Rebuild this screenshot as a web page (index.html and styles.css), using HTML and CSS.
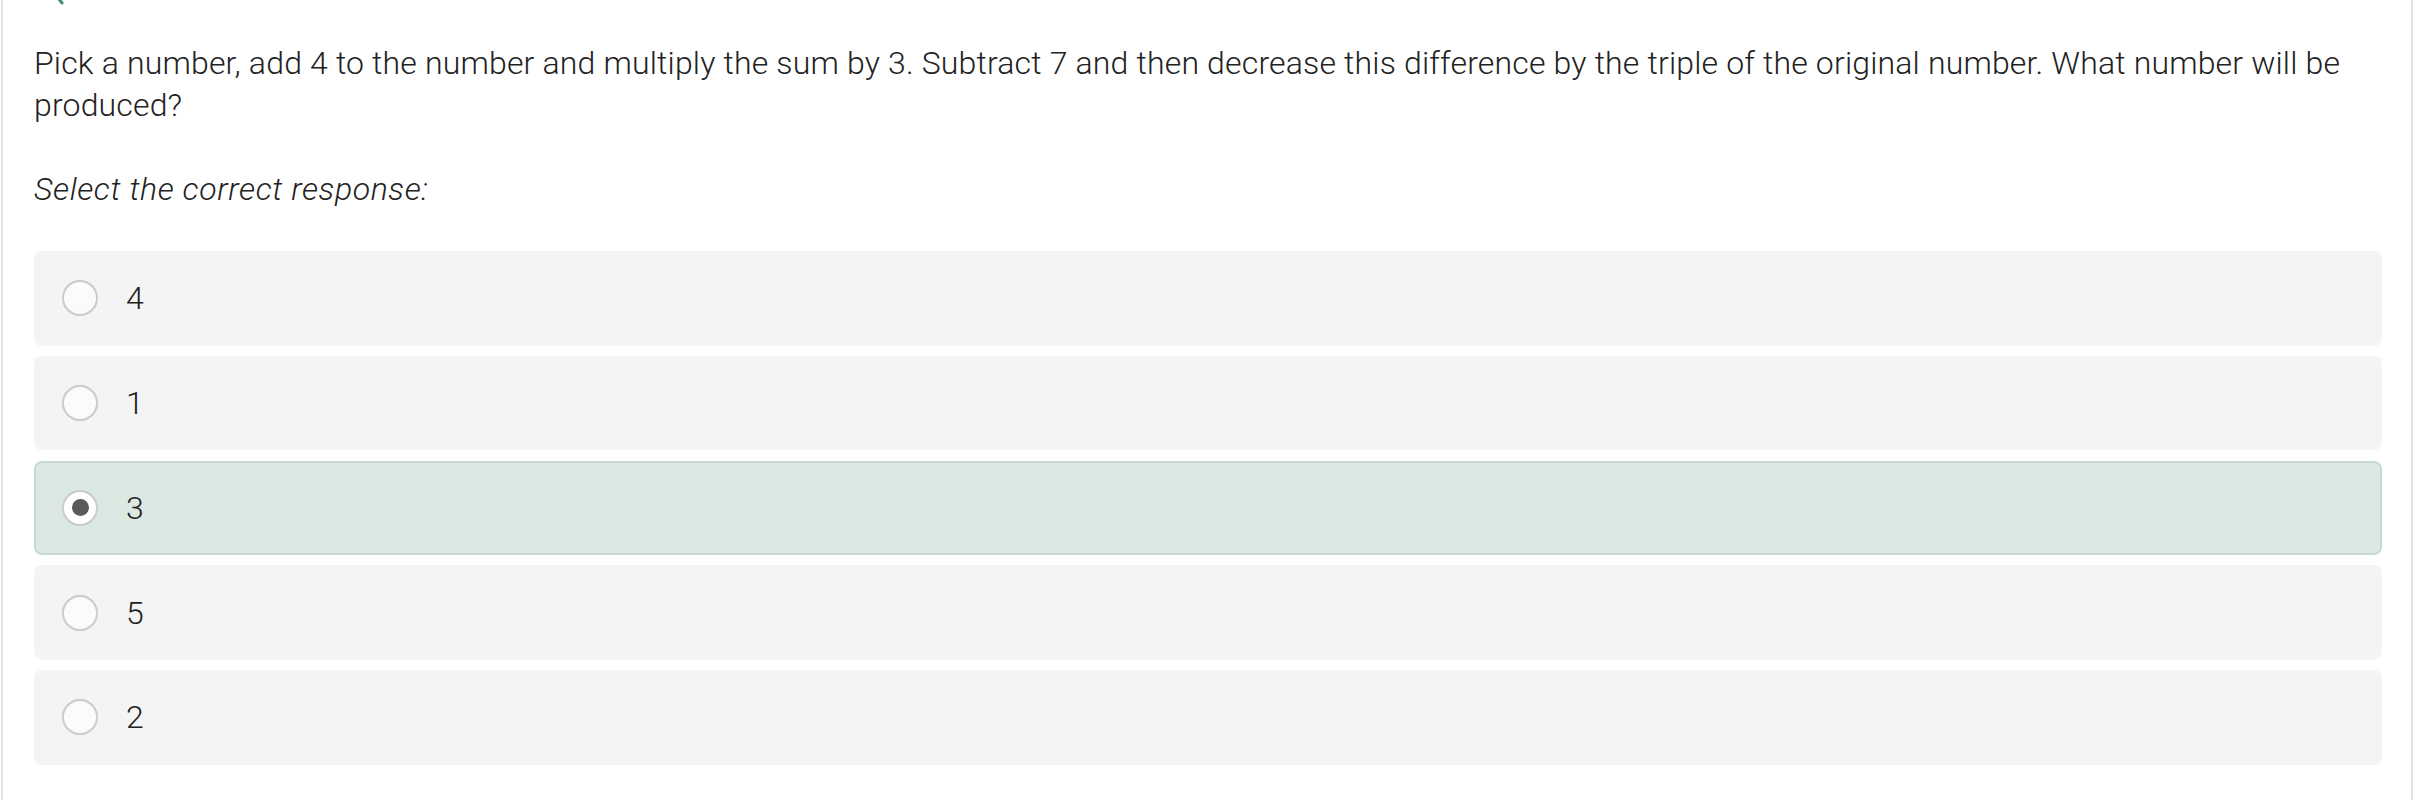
FILE: index.html
```html
<!DOCTYPE html>
<html lang="en">
<head>
<meta charset="utf-8">
<title>Question</title>
<link rel="stylesheet" href="styles.css">
</head>
<body>
<div class="page">
  <svg class="top-icon" width="20" height="12" viewBox="0 0 20 12"><path d="M2 -6 L9 3" stroke="#3f8f6f" stroke-width="3" stroke-linecap="round" fill="none"/></svg>
  <p class="question">Pick a number, add 4 to the number and multiply the sum by 3. Subtract 7 and then decrease this difference by the triple of the original number. What number will be produced?</p>
  <p class="prompt">Select the correct response:</p>
  <div class="options">
    <label class="option"><span class="radio"></span><span class="label">4</span></label>
    <label class="option"><span class="radio"></span><span class="label">1</span></label>
    <label class="option selected"><span class="radio"></span><span class="label">3</span></label>
    <label class="option"><span class="radio"></span><span class="label">5</span></label>
    <label class="option"><span class="radio"></span><span class="label">2</span></label>
  </div>
</div>
</body>
</html>
```
FILE: styles.css
```css
html, body {
  margin: 0;
  padding: 0;
  background: #ffffff;
}
body {
  font-family: Roboto, "Liberation Sans", sans-serif;
  font-weight: 300;
  color: #222222;
}
.page {
  position: relative;
  margin-left: 1px;
  width: 2412px;
  height: 800px;
  box-sizing: border-box;
  border-left: 2px solid #e2e2e2;
  border-right: 2px solid #e2e2e2;
  padding: 42px 29px 0 31px;
}
.top-icon {
  position: absolute;
  left: 50px;
  top: 0;
}
.question {
  margin: 0;
  font-size: 32px;
  letter-spacing: 0.16px;
  line-height: 42px;
}
.prompt {
  margin: 42px 0 0 0;
  font-size: 32px;
  letter-spacing: 0.6px;
  line-height: 42px;
  font-style: italic;
}
.options {
  margin-top: 41px;
  display: flex;
  flex-direction: column;
  gap: 10.25px;
}
.option {
  display: flex;
  align-items: center;
  height: 94.5px;
  box-sizing: border-box;
  padding-left: 28px;
  background: #f4f4f4;
  border-radius: 8px;
}
.option.selected {
  background: #dbe9e2;
  border: 2px solid #c6d9cf;
  padding-left: 26px;
}
.radio {
  width: 36px;
  height: 36px;
  box-sizing: border-box;
  border-radius: 50%;
  border: 2px solid #cbcbcb;
  background: #fbfbfb;
  display: flex;
  align-items: center;
  justify-content: center;
  flex: none;
}
.selected .radio {
  background: #ffffff;
}
.selected .radio::after {
  content: "";
  width: 17px;
  height: 17px;
  border-radius: 50%;
  background: #5a5a5a;
}
.label {
  margin-left: 28px;
  font-size: 32px;
  line-height: 42px;
}
```
